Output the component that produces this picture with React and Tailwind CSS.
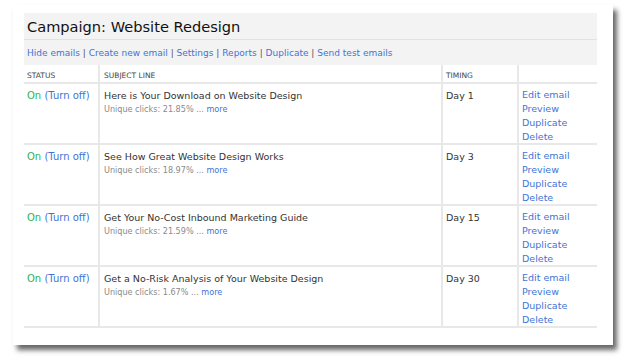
import React from "react";

const rows = [
  { subject: "Here is Your Download on Website Design", clicks: "21.85%", day: "Day 1" },
  { subject: "See How Great Website Design Works", clicks: "18.97%", day: "Day 3" },
  { subject: "Get Your No-Cost Inbound Marketing Guide", clicks: "21.59%", day: "Day 15" },
  { subject: "Get a No-Risk Analysis of Your Website Design", clicks: "1.67%", day: "Day 30" },
];

const font = { fontFamily: '"DejaVu Sans", Verdana, sans-serif' };

export default function App() {
  return (
    <div className="w-[629px] h-[361px] bg-white pt-[5px] pl-[13px]" style={font}>
      <div className="w-[600px] h-[340px] bg-white shadow-[4px_5px_5px_rgba(0,0,0,0.6)] pt-[8px] pl-[11px]">
        <div className="w-[573px]">
          <div className="bg-[#f3f3f3]">
            <div className="h-[27px] px-[3px] pt-[5px] text-[14.6px] leading-[18px] text-[#111] border-b border-[#e2e2e2]">
              Campaign: Website Redesign
            </div>
            <div className="h-[25px] px-[3px] pt-[7px] text-[9px] leading-[12px] text-[#3f74d6]">
              <span>Hide emails</span> <span className="text-[#555]">|</span> <span>Create new email</span>{" "}
              <span className="text-[#555]">|</span> <span>Settings</span> <span className="text-[#555]">|</span>{" "}
              <span>Reports</span> <span className="text-[#555]">|</span> <span>Duplicate</span>{" "}
              <span className="text-[#555]">|</span> <span>Send test emails</span>
            </div>
          </div>
          <div className="grid grid-cols-[76px_343px_76px_78px] text-[9.5px]">
            <div className="h-[19px] pl-[3px] pt-[6px] text-[7.5px] leading-[10px] text-[#444] border-b-2 border-r-2 border-[#e8e8e8]">STATUS</div>
            <div className="h-[19px] pl-[4px] pt-[6px] text-[7.5px] leading-[10px] text-[#444] border-b-2 border-r-2 border-[#e8e8e8]">SUBJECT LINE</div>
            <div className="h-[19px] pl-[3px] pt-[6px] text-[7.5px] leading-[10px] text-[#444] border-b-2 border-r-2 border-[#e8e8e8]">TIMING</div>
            <div className="h-[19px] border-b-2 border-[#e8e8e8]"></div>
            {rows.map((r, i) => (
              <React.Fragment key={i}>
                <div className="h-[61px] pl-[3px] pt-[5px] leading-[14px] text-[10px] border-b-2 border-r-2 border-[#e8e8e8]">
                  <span className="text-[#2fb34a]">On</span> <span className="text-[#3f74d6]">(Turn off)</span>
                </div>
                <div className="h-[61px] pl-[4px] pt-[5px] border-b-2 border-r-2 border-[#e8e8e8]">
                  <div className="leading-[14px] text-[#333]">{r.subject}</div>
                  <div className="text-[8.1px] leading-[12px] text-[#8a8a8a]">
                    Unique clicks: {r.clicks} ... <span className="text-[#3f74d6]">more</span>
                  </div>
                </div>
                <div className="h-[61px] pl-[3px] pt-[5px] leading-[14px] text-[#333] border-b-2 border-r-2 border-[#e8e8e8]">{r.day}</div>
                <div className="h-[61px] pl-[3px] pt-[4px] leading-[14px] text-[#3f74d6] border-b-2 border-[#e8e8e8]">
                  <div>Edit email</div>
                  <div>Preview</div>
                  <div>Duplicate</div>
                  <div>Delete</div>
                </div>
              </React.Fragment>
            ))}
          </div>
        </div>
      </div>
    </div>
  );
}
